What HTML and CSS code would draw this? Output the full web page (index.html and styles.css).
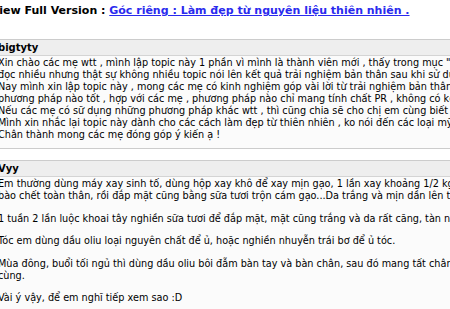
FILE: index.html
```html
<!DOCTYPE html>
<html>
<head>
<meta charset="utf-8">
<link rel="stylesheet" href="styles.css">
</head>
<body>
<div class="page">
  <div class="navbar">View Full Version : <a href="#">Góc riêng : Làm đẹp từ nguyên liệu thiên nhiên .</a></div>
  <div class="post">
    <div class="posttop"><span class="username">bigtyty</span></div>
    <div class="posttext">Xin chào các mẹ wtt , mình lập topic này 1 phần vì mình là thành viên mới , thấy trong mục "Làm đẹp" có<br>đọc nhiều nhưng thật sự không nhiều topic nói lên kết quả trải nghiệm bản thân sau khi sử dụng , ...<br>Nay mình xin lập topic này , mong các mẹ có kinh nghiệm góp vài lời từ trải nghiệm bản thân , để các mẹ<br>phương pháp nào tốt , hợp với các mẹ , phương pháp nào chỉ mang tính chất PR , không có kết quả .<br>Nếu các mẹ có sữ dụng những phương pháp khác wtt , thì cũng chia sẽ cho chị em cùng biết nhé .<br>Mình xin nhắc lại topic này dành cho các cách làm đẹp từ thiên nhiên , ko nói đến các loại mỹ phẩm .<br>Chân thành mong các mẹ đóng góp ý kiến ạ !</div>
  </div>
  <div class="post">
    <div class="posttop"><span class="username">Vyy</span></div>
    <div class="posttext">
      <p>Em thường dùng máy xay sinh tố, dùng hộp xay khô để xay mịn gạo, 1 lần xay khoảng 1/2 kg, dùng để tắm tẩy<br>bào chết toàn thân, rồi đắp mặt cũng bằng sữa tươi trộn cám gạo...Da trắng và mịn dần lên trông thấy.</p>
      <p>1 tuần 2 lần luộc khoai tây nghiền sữa tươi để đắp mặt, mặt cũng trắng và da rất căng, tàn nhang cũng mờ.</p>
      <p>Tóc em dùng dầu oliu loại nguyên chất để ủ, hoặc nghiền nhuyễn trái bơ để ủ tóc.</p>
      <p>Mùa đông, buổi tối ngủ thì dùng dầu oliu bôi đẫm bàn tay và bàn chân, sau đó mang tất chân, tất tay đi ngủ<br>cùng.</p>
      <p>Vài ý vậy, để em nghĩ tiếp xem sao :D</p>
    </div>
  </div>
</div>
</body>
</html>
```
FILE: styles.css
```css
html, body {
  margin: 0;
  padding: 0;
  background: #ffffff;
  overflow: hidden;
}
body {
  font-family: Verdana, "DejaVu Sans", sans-serif;
  color: #000000;
}
.page {
  margin-left: -9px;
  width: 700px;
}
.navbar {
  font-size: 11px;
  font-weight: bold;
  padding: 4px 0 0 0;
  height: 35px;
}
.navbar a {
  color: #2a2aee;
  text-decoration: underline;
}
.post {
  border: 1px solid #cccccc;
  margin-bottom: 11px;
  margin-left: 3px;
}
.posttop {
  background: #eeeeee;
  border-bottom: 1px solid #d4d4d4;
  padding: 1px 3px 0 3px;
  height: 14px;
  font-size: 10px;
  line-height: 14px;
}
.username {
  font-weight: bold;
}
.posttext {
  background: #fbfbfb;
  padding: 1px 3px 7px 3px;
  font-size: 9.7px;
  line-height: 12px;
}
.posttext p {
  margin: 0 0 10.5px 0;
}
.posttext p:last-child {
  margin-bottom: 0;
}
```
